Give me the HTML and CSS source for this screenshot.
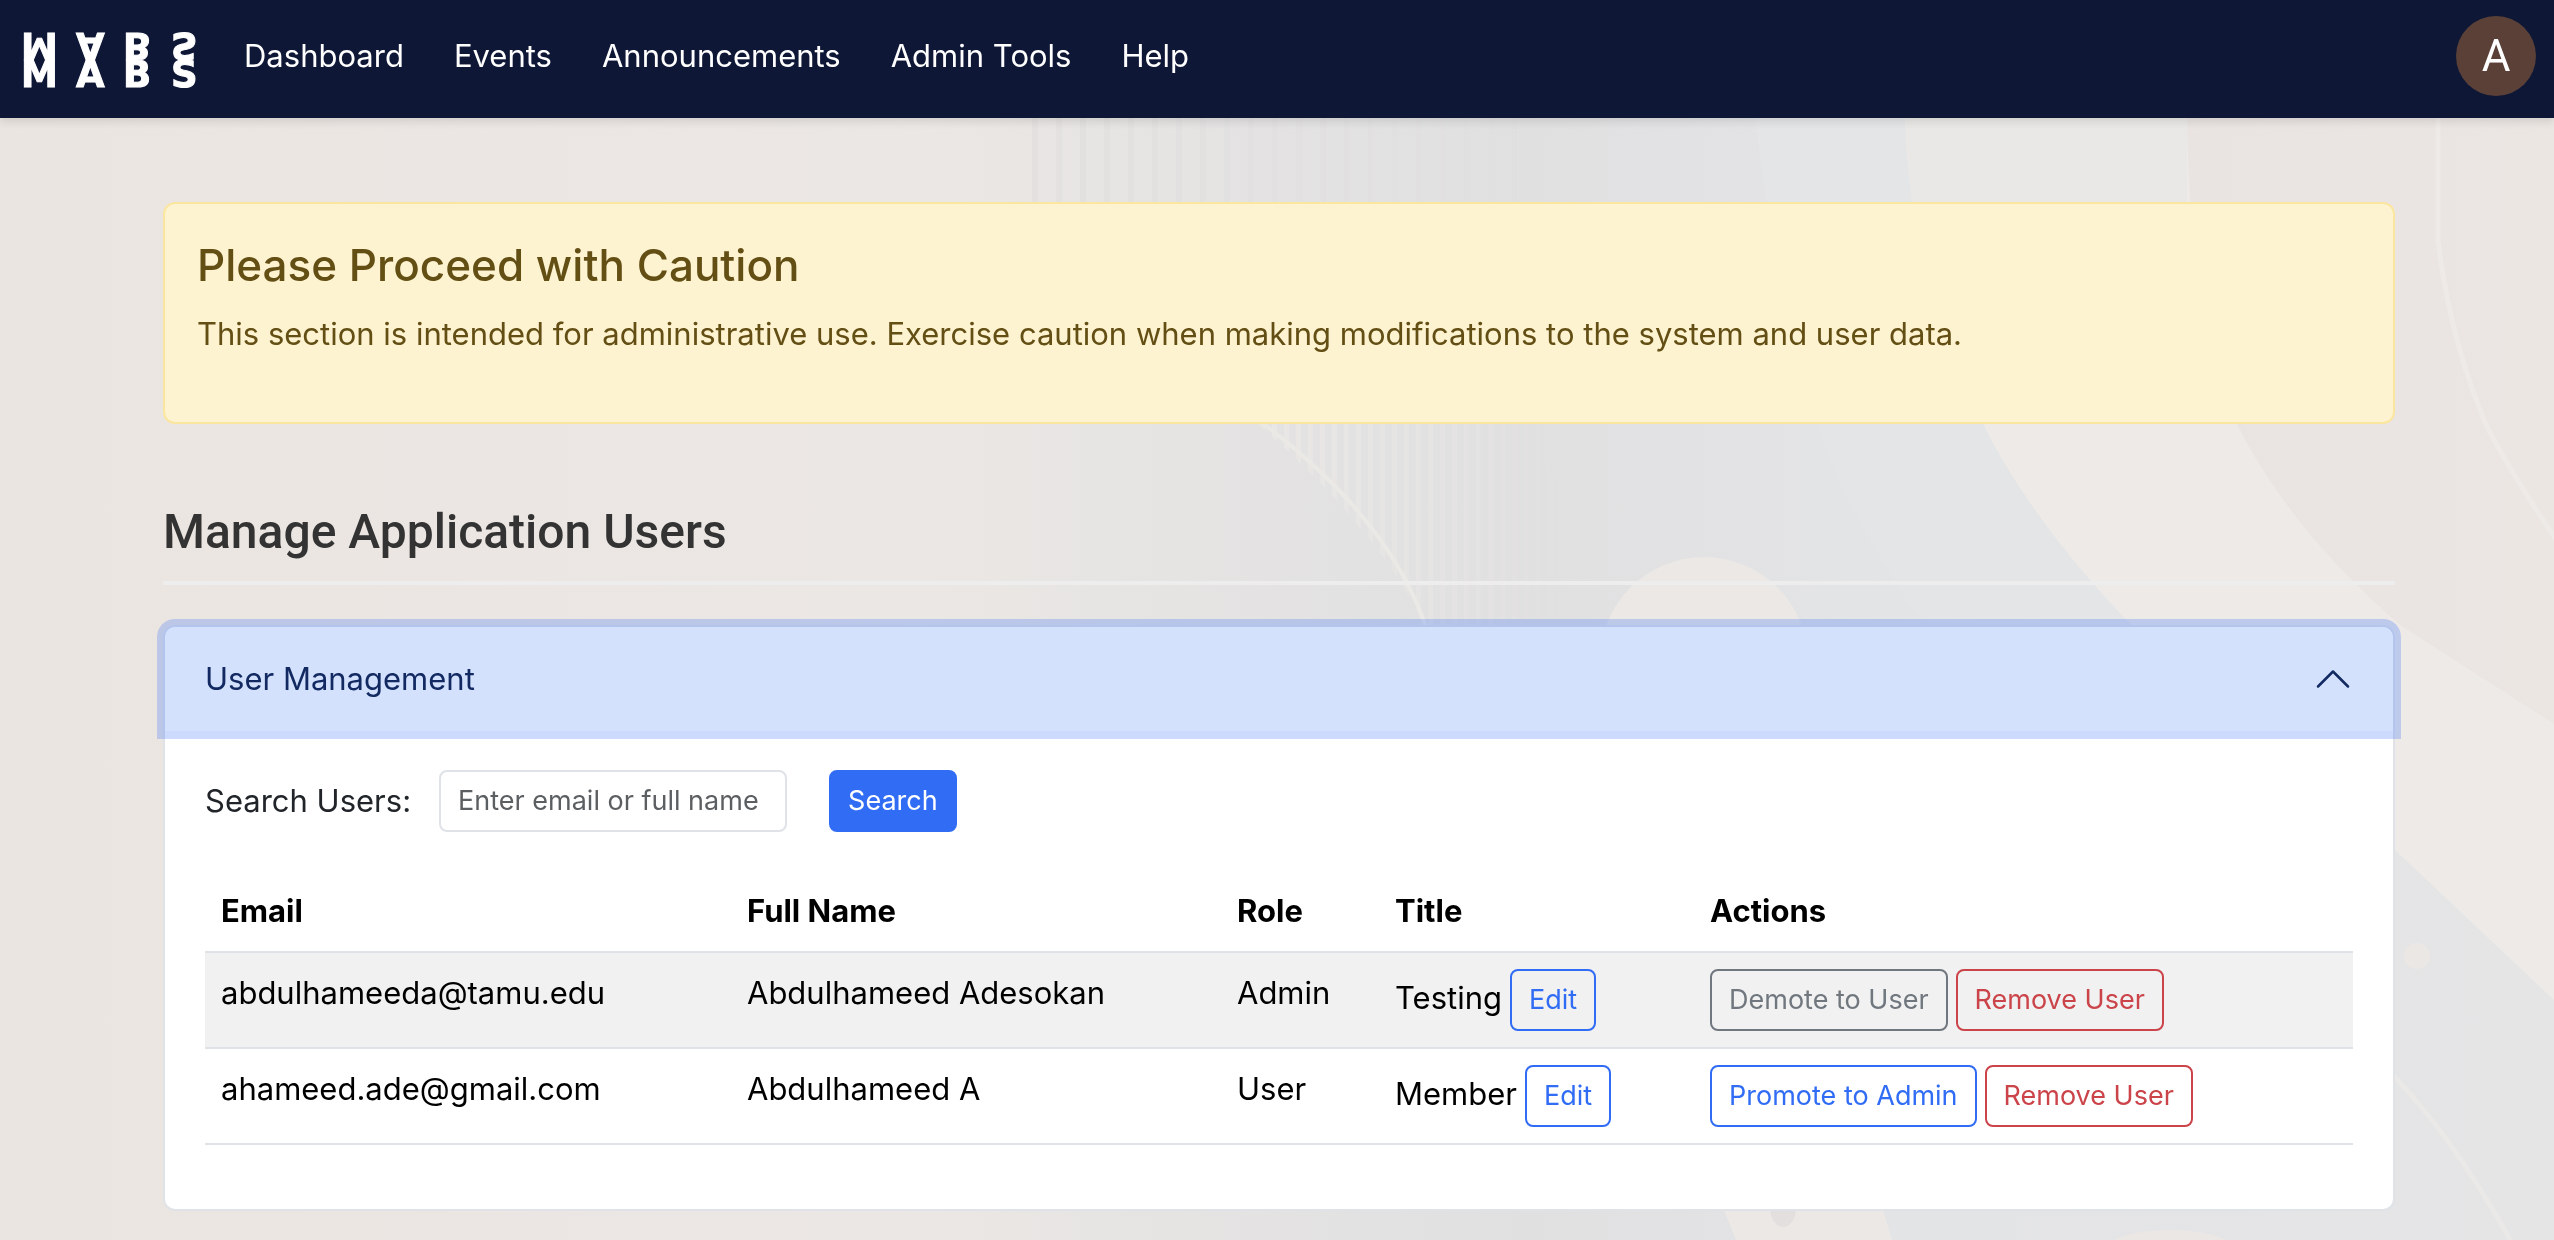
FILE: index.html
```html
<!DOCTYPE html>
<html lang="en">
<head>
<meta charset="utf-8">
<meta name="viewport" content="width=device-width, initial-scale=1">
<title>MABS Admin Tools</title>
<link rel="stylesheet" href="styles.css">
</head>
<body>
<svg class="backdrop" viewBox="0 0 2554 1240" preserveAspectRatio="xMidYMin slice" aria-hidden="true">
  <defs>
    <linearGradient id="wash" x1="0" x2="1" y1="0" y2="0">
      <stop offset="0" stop-color="#ebe5e1"/>
      <stop offset=".36" stop-color="#ebe7e4"/>
      <stop offset=".46" stop-color="#e5e4e3"/>
      <stop offset=".6" stop-color="#e1e0e1"/>
      <stop offset=".72" stop-color="#e3e4e6"/>
      <stop offset="1" stop-color="#e5e5e6"/>
    </linearGradient>
    <linearGradient id="rose" x1="0" x2="1" y1="0" y2="0">
      <stop offset="0" stop-color="#e9e3e2"/>
      <stop offset="1" stop-color="#ebe6e2"/>
    </linearGradient>
    <linearGradient id="fade" x1="0" x2="1" y1="0" y2="0">
      <stop offset="0" stop-color="#fff"/>
      <stop offset="1" stop-color="#fff" stop-opacity="0"/>
    </linearGradient>
    <pattern id="pinstripes" width="24" height="10" patternUnits="userSpaceOnUse">
      <rect width="6" height="10" fill="#dcdad9" opacity=".4"/>
    </pattern>
    <pattern id="finestripes" width="12" height="10" patternUnits="userSpaceOnUse">
      <rect width="5" height="10" fill="#ebe9e6" opacity=".8"/>
    </pattern>
    <mask id="topfade"><rect x="1030" y="0" width="500" height="424" fill="url(#fade)"/></mask>
    <mask id="arcfade"><rect x="1250" y="400" width="340" height="300" fill="url(#fade)"/></mask>
  </defs>
  <rect width="2554" height="1240" fill="url(#wash)"/>
  <rect x="1030" y="0" width="500" height="424" fill="url(#pinstripes)" mask="url(#topfade)"/>
  <path d="M1258 424Q1390 540 1430 640H1590L1540 424Z" fill="url(#finestripes)" mask="url(#arcfade)"/>
  <path d="M1200 380Q1390 500 1430 640" fill="none" stroke="#ebe9e6" stroke-width="4"/>
  <path d="M1750 0H1905Q1900 250 1983 424Q2040 540 2133 620H1920Q1840 500 1818 424Q1750 200 1750 0Z" fill="#e4e5e7"/>
  <path d="M1905 0V118Q1910 280 1983 424Q2080 620 2395 850L2554 1000V0Z" fill="#edeae8"/>
  <path d="M1905 0V118L1912 210H2187V0Z" fill="#e9e8e6"/>
  <path d="M2187 0V118Q2190 320 2237 424Q2290 530 2400 625L2554 724V0Z" fill="url(#rose)"/>
  <path d="M2438 100V240Q2450 340 2487 427Q2515 480 2560 545" fill="none" stroke="#edeae7" stroke-width="5"/>
  <circle cx="1704" cy="661" r="104" fill="#ece8e5"/>
  <circle cx="2417" cy="956" r="13" fill="#ebe7e5"/>
  <path d="M2380 1062Q2450 1130 2513 1245" fill="none" stroke="#ebe9e8" stroke-width="5"/>
  <path d="M1720 1200L1736 1240H1892L1880 1200Z" fill="#ece8e5"/>
  <ellipse cx="1783" cy="1208" rx="13" ry="19" fill="#e2dfde"/>
  <ellipse cx="2170" cy="1246" rx="60" ry="16" fill="#ebe7e5"/>
</svg>

<nav class="navbar" aria-label="Main">
  <a class="brand" href="#" aria-label="MABS home">
    <svg class="brand-mark" viewBox="0 0 178 56" aria-hidden="true">
      <g id="mark">
        <text class="brand-letters" x="-1 54 101 149" y="55">MABS</text>
      </g>
      <use href="#mark" transform="matrix(1 0 0 -1 0 56)"/>
    </svg>
  </a>
  <div class="nav-links">
    <a href="#">Dashboard</a>
    <a href="#">Events</a>
    <a href="#">Announcements</a>
    <a href="#">Admin Tools</a>
    <a href="#">Help</a>
  </div>
  <button class="avatar" type="button" aria-label="Account">A</button>
</nav>

<main class="page">
  <section class="alert" role="alert">
    <h4 class="alert-title">Please Proceed with Caution</h4>
    <p class="alert-text">This section is intended for administrative use. Exercise caution when making modifications to the system and user data.</p>
  </section>

  <h2 class="section-title">Manage Application Users</h2>

  <section class="accordion">
    <button class="accordion-toggle" type="button" aria-expanded="true" aria-controls="users-panel">
      <span>User Management</span>
      <svg class="chevron" viewBox="0 0 16 16" aria-hidden="true"><path d="M2 11l6-6 6 6" fill="none" stroke="currentColor" stroke-linecap="round" stroke-linejoin="round"/></svg>
    </button>
    <div class="accordion-body" id="users-panel">
      <form class="search">
        <label for="user-search">Search Users:</label>
        <input class="search-input" id="user-search" type="text" placeholder="Enter email or full name">
        <button class="btn btn-primary" type="button">Search</button>
      </form>
      <table class="users">
        <colgroup><col class="col-email"><col class="col-name"><col class="col-role"><col class="col-title"><col></colgroup>
        <thead>
          <tr><th scope="col">Email</th><th scope="col">Full Name</th><th scope="col">Role</th><th scope="col">Title</th><th scope="col">Actions</th></tr>
        </thead>
        <tbody>
          <tr>
            <td>abdulhameeda@tamu.edu</td>
            <td>Abdulhameed Adesokan</td>
            <td>Admin</td>
            <td><div class="cell-group"><span>Testing</span><button class="btn btn-outline-primary" type="button">Edit</button></div></td>
            <td><div class="cell-group"><button class="btn btn-outline-secondary" type="button">Demote to User</button><button class="btn btn-outline-danger" type="button">Remove User</button></div></td>
          </tr>
          <tr>
            <td>ahameed.ade@gmail.com</td>
            <td>Abdulhameed A</td>
            <td>User</td>
            <td><div class="cell-group"><span>Member</span><button class="btn btn-outline-primary" type="button">Edit</button></div></td>
            <td><div class="cell-group"><button class="btn btn-outline-primary" type="button">Promote to Admin</button><button class="btn btn-outline-danger" type="button">Remove User</button></div></td>
          </tr>
        </tbody>
      </table>
    </div>
  </section>
</main>
</body>
</html>
```
FILE: styles.css
```css
*, *::before, *::after { box-sizing: border-box; }

body {
  margin: 0;
  min-height: 100vh;
  background: #ebe5e1;
  color: #212529;
  font-family: Inter, "Liberation Sans", sans-serif;
  font-size: 31px;
  line-height: 48px;
}

button, input { font: inherit; }

.backdrop {
  position: fixed;
  inset: 0;
  z-index: -1;
  width: 100%;
  height: 100%;
}

.navbar {
  display: flex;
  align-items: center;
  padding: 16px 18px 22px 22px;
  background: #0e1736;
  box-shadow: 0 4px 8px rgba(0, 0, 0, .1);
}

.brand { display: flex; margin-right: 44px; padding-top: 8px; }
.brand-mark { display: block; width: 178px; height: 56px; overflow: visible; }
.brand-letters {
  fill: #fff;
  stroke: #fff;
  stroke-width: 1px;
  font-family: "DejaVu Sans", sans-serif;
  font-size: 37px;
  font-weight: 700;
}

.nav-links { display: flex; gap: 50px; }
.nav-links a { color: #fff; text-decoration: none; }

.avatar {
  width: 80px;
  height: 80px;
  margin-left: auto;
  padding: 0;
  border: 0;
  border-radius: 50%;
  background: #5a4037;
  color: #fff;
  font-family: Roboto, sans-serif;
  font-size: 44px;
}

.page { padding: 84px 159px 28px 163px; }

.alert {
  padding: 32px;
  border: 2px solid #fbe69f;
  border-radius: 12px;
  background: #fdf3d1;
  color: #634e14;
}
.alert-title { margin: 0 0 16px; font-size: 44px; font-weight: 500; line-height: 58px; }
.alert-text { margin: 0 0 32px; }

.section-title {
  margin: 79px 0 40px;
  padding-bottom: 20px;
  border-bottom: 4px solid #ededed;
  color: #333;
  font-family: Roboto, sans-serif;
  font-size: 48px;
  font-weight: 500;
  line-height: 58px;
}

.accordion {
  border: 2px solid #dfe3e8;
  border-radius: 12px;
  background: #fff;
}
.accordion-toggle {
  position: relative;
  display: flex;
  align-items: center;
  justify-content: space-between;
  width: 100%;
  height: 104px;
  padding: 0 40px;
  border: 0;
  border-radius: 10px 10px 0 0;
  background: #d3e1fd;
  box-shadow: 0 0 0 8px rgba(47, 108, 247, .25);
  color: #122a61;
}
.chevron { width: 40px; height: 40px; }

.accordion-body { padding: 39px 40px 64px; }

.search { display: flex; align-items: center; }
.search label { margin-right: 28px; }
.search-input {
  width: 348px;
  margin-right: 42px;
  padding: 8px 17px;
  border: 2px solid #dfe2e7;
  border-radius: 8px;
  background: #fff;
  font-size: 27px;
  line-height: 42px;
}
.search-input::placeholder { color: #5c5f62; opacity: 1; }

.btn {
  padding: 8px 17px;
  border: 2px solid transparent;
  border-radius: 8px;
  background: transparent;
  font-size: 27px;
  line-height: 42px;
  white-space: nowrap;
}
.btn-primary { border-color: #316cf5; background: #316cf5; color: #fff; }
.btn-outline-primary { border-color: #316cf5; color: #316cf5; }
.btn-outline-secondary { border-color: #70777e; color: #70777e; }
.btn-outline-danger { border-color: #cb444a; color: #cb444a; }

.users {
  width: 100%;
  margin-top: 39px;
  border-collapse: separate;
  border-spacing: 0;
  table-layout: fixed;
  color: #000;
}
.col-email { width: 526px; }
.col-name { width: 490px; }
.col-role { width: 158px; }
.col-title { width: 315px; }
.users th, .users td {
  padding: 16px;
  border-bottom: 2px solid #dfe2e7;
  text-align: left;
  vertical-align: top;
}
.users th { font-weight: 700; }
.users tbody tr:nth-child(odd) td { background: #f1f1f1; }
.cell-group { display: flex; align-items: baseline; gap: 8px; }
```
